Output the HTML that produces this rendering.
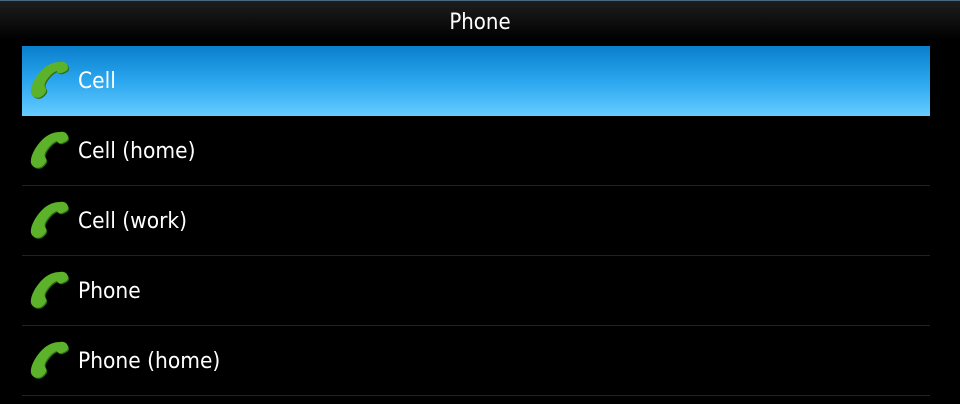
<!DOCTYPE html>
<html><head><style>
body{margin:0;width:960px;height:404px;background:#000;overflow:hidden;font-family:"DejaVu Sans Condensed","Liberation Sans",sans-serif;color:#fff;position:relative}
.hdr{position:absolute;left:0;top:0;width:960px;height:40px;background:linear-gradient(#1e1e1e,#0c0c0c 60%,#000);border-top:1px solid #4a6a80;box-sizing:border-box}
.hdr span{position:absolute;left:0;right:0;top:9px;text-align:center;font-size:22px}
.row{position:absolute;left:22px;width:908px;height:70px;border-bottom:1px solid #1c2228;box-sizing:border-box}
.row.sel{background:linear-gradient(#0a7fcc,#2aa6ee 50%,#66ccff);border-bottom:none}
.row span{position:absolute;left:56px;top:22px;font-size:22.5px}
.row svg{position:absolute;left:8px;top:14px}
</style></head><body>
<div class="hdr"><span>Phone</span></div>
<svg width="0" height="0" style="position:absolute"><defs>
<symbol id="ph" viewBox="0 0 40 40">
<path d="M30 3 C35 2 39 5 39 9 C39 12 35 13 33 14 C30 15 28 13 28 12 C24 13 19 18 16 24 C15 27 16 28 17 30 C18 33 15 36 12 38 C8 40 3 38 2 34 C1 28 6 18 13 11 C19 5 25 3 30 3 Z" fill="#2f6d12"/>
<path d="M30 2 C35 1 38 4 38 8 C38 11 34 12 32 13 C29 14 27 12 27 11 C23 12 18 17 15 23 C14 26 15 27 16 29 C17 32 14 35 11 37 C7 39 2 37 1 33 C0 27 5 17 12 10 C18 4 24 2 30 2 Z" fill="#5cb22a"/>
</symbol></defs></svg>
<div class="row sel" style="top:46px"><svg width="40" height="40"><use href="#ph"/></svg><span>Cell</span></div>
<div class="row" style="top:116px"><svg width="40" height="40"><use href="#ph"/></svg><span>Cell (home)</span></div>
<div class="row" style="top:186px"><svg width="40" height="40"><use href="#ph"/></svg><span>Cell (work)</span></div>
<div class="row" style="top:256px"><svg width="40" height="40"><use href="#ph"/></svg><span>Phone</span></div>
<div class="row" style="top:326px"><svg width="40" height="40"><use href="#ph"/></svg><span>Phone (home)</span></div>
</body></html>
